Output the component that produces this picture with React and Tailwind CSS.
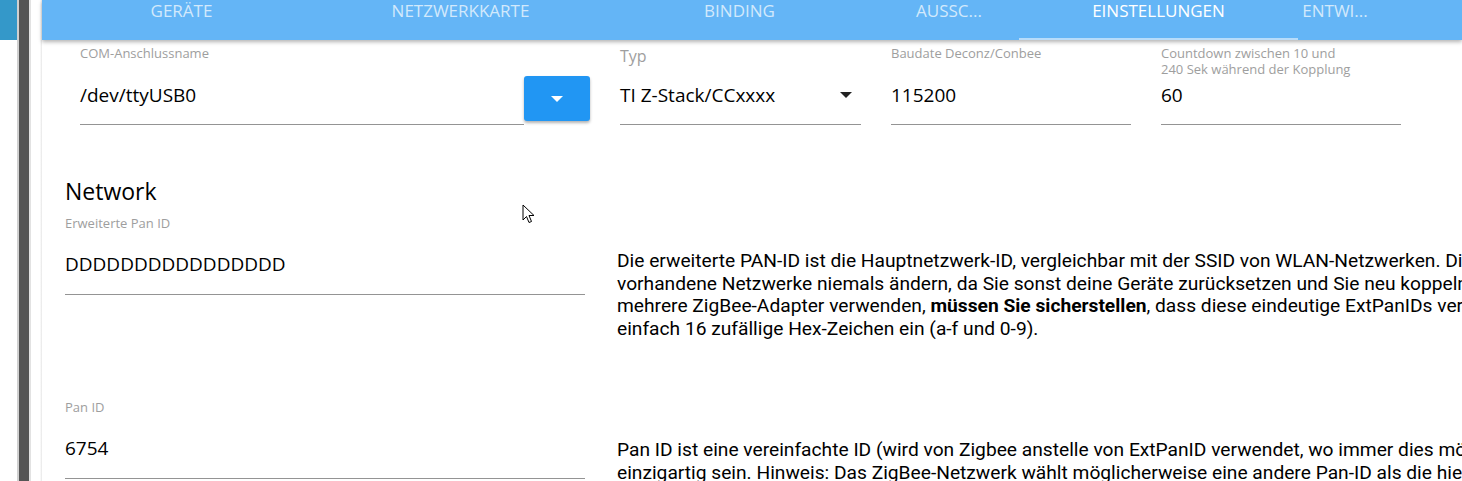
import React from "react";

const tabs = [
  { label: "GERÄTE", w: "w-[279px]" },
  { label: "NETZWERKKARTE", w: "w-[279px]" },
  { label: "BINDING", w: "w-[279px]" },
  { label: "AUSSC...", w: "w-[140px]" },
  { label: "EINSTELLUNGEN", w: "w-[279px]", active: true },
  { label: "ENTWI...", w: "w-[74px]" },
];

function Field({ label, value, width, children }) {
  return (
    <div className={`${width} shrink-0 h-[85px] border-b border-[#949494] flex flex-col`}>
      <div className="pt-[5px] text-[13px] leading-[16px] text-[#9e9e9e]">{label}</div>
      <div className="mt-auto pb-[17px] text-[19px] leading-[24px] text-black flex items-center">
        {value}
        {children}
      </div>
    </div>
  );
}

function WideField({ label, value }) {
  return (
    <div className="w-[520px] shrink-0 h-[80px] border-b border-[#949494] flex flex-col">
      <div className="text-[13px] leading-[16px] text-[#9e9e9e]">{label}</div>
      <div className="mt-auto pb-[18px] text-[19px] leading-[24px] text-black">{value}</div>
    </div>
  );
}

function Cursor() {
  return (
    <svg className="absolute left-[522px] top-[204px]" width="14" height="21" viewBox="0 0 14 21">
      <path d="M1 1 L1 16 L4.5 12.5 L7 18.5 L9.5 17.5 L7 11.5 L12 11.5 Z" fill="white" stroke="black" strokeWidth="1" strokeLinejoin="round" />
    </svg>
  );
}

export default function App() {
  return (
    <div className="relative flex h-[481px] w-[1462px] overflow-hidden bg-white" style={{ fontFamily: '"Open Sans", "Noto Sans", sans-serif' }}>

      {/* LEFT EDGE */}
      <div className="w-[17px] shrink-0">
        <div className="h-10 bg-[#3498c9]" />
      </div>
      <div className="w-[2px] shrink-0 bg-[#d0d0d0]" />
      <div className="w-[10px] shrink-0 bg-[#555555]" />
      <div className="w-[2px] shrink-0 bg-[#e2e2e2]" />
      <div className="w-[9px] shrink-0 bg-white" />
      <div className="w-[2px] shrink-0 bg-gradient-to-r from-white to-[#e6e6e6]" />

      {/* MAIN */}
      <div className="flex-1 flex flex-col min-w-0">

        {/* TABS */}
        <div className="relative z-10 h-10 shrink-0 bg-[#64b5f6] flex shadow-[0_2px_4px_rgba(0,0,0,0.3)]">
          {tabs.map((t) => (
            <div key={t.label} className={`${t.w} shrink-0 relative text-center text-[17px] leading-[21px] whitespace-nowrap ${t.active ? "text-white" : "text-[#d2e9fc]"}`}>
              {t.label}
              {t.active && <div className="absolute left-0 right-0 bottom-0 h-[2px] bg-[#b7dcfa]" />}
            </div>
          ))}
        </div>

        {/* SERIAL SETTINGS */}
        <div className="flex pl-[38px]">
          <Field label="COM-Anschlussname" value="/dev/ttyUSB0" width="w-[444px]" />
          <div className="pt-[36px]">
            <button className="w-[66px] h-[45px] rounded-[3px] bg-[#2196f3] shadow-[0_2px_3px_rgba(0,0,0,0.3)] flex items-center justify-center">
              <span className="block w-0 h-0 border-l-[6px] border-r-[6px] border-t-[6px] border-l-transparent border-r-transparent border-t-white" />
            </button>
          </div>
          <div className="w-[30px]" />
          <div className="w-[241px] shrink-0 h-[85px] border-b border-[#949494] flex flex-col">
            <div className="pt-[6px] text-[16px] leading-[20px] text-[#9e9e9e]">Typ</div>
            <div className="mt-auto pb-[17px] text-[19px] leading-[24px] text-black flex items-center justify-between pr-[9px]">
              TI Z-Stack/CCxxxx
              <span className="block w-0 h-0 border-l-[6px] border-r-[6px] border-t-[6px] border-l-transparent border-r-transparent border-t-[#222]" />
            </div>
          </div>
          <div className="w-[30px]" />
          <Field label="Baudate Deconz/Conbee" value="115200" width="w-[240px]" />
          <div className="w-[30px]" />
          <Field
            label={<>Countdown zwischen 10 und<br />240 Sek während der Kopplung</>}
            value="60"
            width="w-[240px]"
          />
        </div>

        {/* NETWORK */}
        <div className="pl-[23px] pt-[51px]">
          <div className="text-[23px] leading-[30px] text-black">Network</div>

          <div className="flex items-start h-[80px] mt-[9px]">
            <WideField label="Erweiterte Pan ID" value="DDDDDDDDDDDDDDDD" />
            <div className="ml-[32px] pt-[35px] text-[19.2px] leading-[22.7px] text-black whitespace-nowrap" style={{ fontFamily: "Roboto, sans-serif" }}>
              <div>Die erweiterte PAN-ID ist die Hauptnetzwerk-ID, vergleichbar mit der SSID von WLAN-Netzwerken. Diese sollten Sie für</div>
              <div>vorhandene Netzwerke niemals ändern, da Sie sonst deine Geräte zurücksetzen und Sie neu koppeln müssen. Wenn Sie</div>
              <div>mehrere ZigBee-Adapter verwenden, <b>müssen Sie sicherstellen</b>, dass diese eindeutige ExtPanIDs verwenden. Geben Sie</div>
              <div>einfach 16 zufällige Hex-Zeichen ein (a-f und 0-9).</div>
            </div>
          </div>

          <div className="flex items-start h-[80px] mt-[104px]">
            <WideField label="Pan ID" value="6754" />
            <div className="ml-[32px] pt-[40px] text-[19.2px] leading-[22.7px] text-black whitespace-nowrap" style={{ fontFamily: "Roboto, sans-serif" }}>
              <div>Pan ID ist eine vereinfachte ID (wird von Zigbee anstelle von ExtPanID verwendet, wo immer dies möglich ist) und muss</div>
              <div>einzigartig sein. Hinweis: Das ZigBee-Netzwerk wählt möglicherweise eine andere Pan-ID als die hier angegebene, wenn</div>
              <div>ausgewählte bereits von einem anderen Netzwerk verwendet wird.</div>
            </div>
          </div>
        </div>
      </div>

      <Cursor />
    </div>
  );
}
